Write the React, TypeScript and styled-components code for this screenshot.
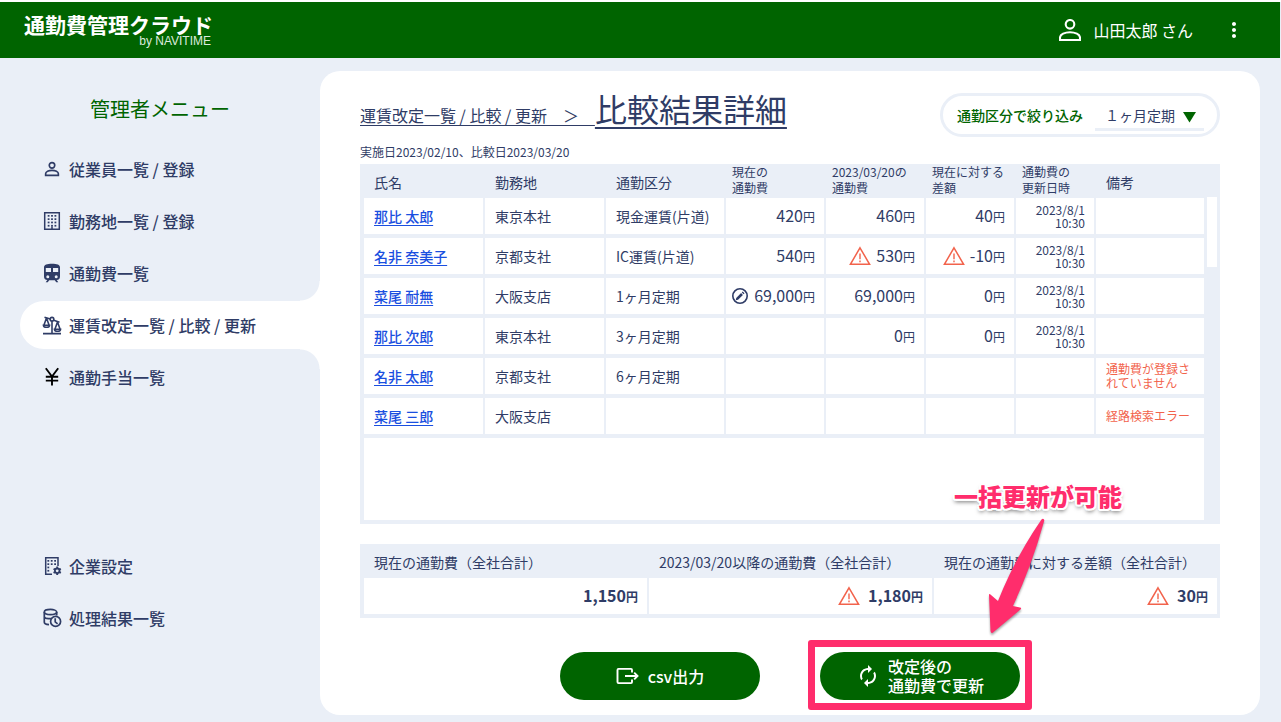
import React from "react";
import styled, { createGlobalStyle, css } from "styled-components";
import { MdAutorenew, MdMoreVert } from "react-icons/md";

const ink = "#2f3c66";
const mist = "#eaeff7";
const green = "#006400";
const alertColor = "#f2634c";
const pink = "#ff2d6c";

const GlobalStyle = createGlobalStyle`
  *, *::before, *::after { box-sizing: border-box; }
  body {
    margin: 0;
    background: ${mist};
    color: ${ink};
    font-family: "Noto Sans CJK JP", sans-serif;
    font-size: 16px;
    line-height: 24px;
  }
  h1, h2, p { margin: 0; font-weight: 400; }
  button, select { font-family: inherit; }
`;

const Page = styled.div`
  min-height: 100vh;
  display: flex;
  flex-direction: column;
  border-top: 2px solid #fff;
`;

const Header = styled.header`
  display: flex;
  align-items: center;
  justify-content: space-between;
  height: 56px;
  margin-right: 1px;
  padding: 0 34px 0 24px;
  background: ${green};
  color: #fff;
`;

const Logo = styled.a`
  display: flex;
  flex-direction: column;
  align-items: flex-end;
  color: #fff;
  text-decoration: none;
`;

const LogoName = styled.span`
  font-size: 21px;
  font-weight: 700;
  line-height: 22px;
`;

const LogoBy = styled.span`
  padding-right: 2px;
  font-family: "Liberation Sans", sans-serif;
  font-size: 12px;
  line-height: 12px;
  color: #dcebdc;
`;

const Account = styled.div`
  display: flex;
  align-items: center;
`;

const AccountName = styled.span`
  margin: 0 29px 0 12px;
`;

const IconButton = styled.button`
  display: flex;
  width: 24px;
  padding: 0;
  border: 0;
  background: none;
  color: inherit;
  justify-content: center;
`;

const Body = styled.div`
  flex: 1;
  display: flex;
`;

const Sidebar = styled.nav`
  flex: 0 0 320px;
  padding-top: 36px;
`;

const SidebarTitle = styled.h2`
  margin-bottom: 21px;
  color: ${green};
  font-size: 20px;
  line-height: 30px;
  text-align: center;
`;

const MenuGroup = styled.ul`
  display: flex;
  flex-direction: column;
  gap: 4px;
  margin: 0 0 141px;
  padding: 0 0 0 20px;
  list-style: none;
  &:last-child { margin-bottom: 0; }
`;

const corner = css`
  content: "";
  position: absolute;
  right: 0;
  width: 20px;
  height: 20px;
`;

const MenuLink = styled.a<{ $active?: boolean }>`
  position: relative;
  display: flex;
  align-items: center;
  gap: 7px;
  height: 48px;
  padding-left: 22px;
  border-radius: 24px 0 0 24px;
  color: ${ink};
  font-weight: 500;
  text-decoration: none;
  svg { flex: none; }
  ${(p) =>
    p.$active &&
    css`
      background: #fff;
      &::before {
        ${corner}
        bottom: 100%;
        background: radial-gradient(circle at 0 0, transparent 19px, #fff 20px);
      }
      &::after {
        ${corner}
        top: 100%;
        background: radial-gradient(circle at 0 100%, transparent 19px, #fff 20px);
      }
    `}
`;

const Card = styled.main`
  flex: 1;
  min-width: 0;
  margin: 13px 21px 7px 0;
  padding: 22px 40px 15px;
  border-radius: 20px;
  background: #fff;
`;

const TitleRow = styled.div`
  display: flex;
  align-items: flex-start;
  justify-content: space-between;
  height: 44px;
`;

const Breadcrumb = styled.div`
  display: flex;
  align-items: baseline;
  line-height: 42px;
`;

const CrumbLink = styled.a`
  color: ${ink};
  white-space: pre;
  text-decoration: underline;
  text-decoration-thickness: 1px;
  text-underline-offset: 3px;
`;

const PageTitle = styled.h1`
  font-size: 32px;
  line-height: 30px;
  text-decoration: underline;
  text-decoration-thickness: 2px;
  text-underline-offset: 5px;
`;

const Filter = styled.div`
  display: flex;
  align-items: center;
  justify-content: space-between;
  width: 280px;
  height: 44px;
  padding: 0 13px 0 14px;
  border: 3px solid ${mist};
  border-radius: 22px;
  font-size: 14px;
`;

const FilterLabel = styled.label`
  color: ${green};
  font-weight: 500;
`;

const SelectBox = styled.div`
  position: relative;
  width: 109px;
  border-bottom: 3px solid ${mist};
  margin-top: 2px;
  svg {
    position: absolute;
    right: 8px;
    top: 11px;
    pointer-events: none;
  }
`;

const Select = styled.select`
  display: block;
  width: 100%;
  height: 27px;
  padding: 0 0 0 10px;
  border: 0;
  background: none;
  color: ${ink};
  font-size: 14px;
  appearance: none;
`;

const DateNote = styled.p`
  margin: 5px 0 2px;
  font-size: 12px;
  line-height: 20px;
`;

const Panel = styled.div`
  display: flex;
  padding-left: 4px;
  background: ${mist};
`;

const Table = styled.table`
  flex: 1;
  width: 100%;
  table-layout: fixed;
  border-collapse: separate;
  border-spacing: 0;
  font-size: 14px;
  line-height: 20px;
`;

const Th = styled.th<{ $small?: boolean }>`
  height: 34px;
  padding: ${(p) => (p.$small ? "0 0 2px 6px" : "1px 0 0 10px")};
  font-weight: 400;
  font-size: ${(p) => (p.$small ? 12 : 14)}px;
  line-height: 16px;
  text-align: left;
  white-space: pre;
`;

const Td = styled.td<{ $kind?: "money" | "date" | "note" | "blank" }>`
  height: ${(p) => (p.$kind === "blank" ? 86 : 40)}px;
  padding: 0 9px 0 10px;
  border-right: 2px solid ${mist};
  border-bottom: 4px solid ${mist};
  background: #fff;
  white-space: nowrap;
  ${(p) => p.$kind === "money" && css`text-align: right; padding-left: 0;`}
  ${(p) => p.$kind === "date" && css`text-align: right; font-size: 12px; line-height: 13px;`}
  ${(p) => p.$kind === "note" && css`color: ${alertColor}; font-size: 12px; line-height: 14px; white-space: normal;`}
`;

const NameLink = styled.a`
  color: #1a4fe0;
  font-weight: 500;
  text-decoration: underline;
  text-decoration-thickness: 1px;
  text-underline-offset: 3px;
`;

const Amount = styled.span<{ $bold?: boolean }>`
  display: flex;
  align-items: center;
  justify-content: flex-end;
  gap: ${(p) => (p.$bold ? 8 : 5)}px;
  font-size: 16px;
  font-weight: ${(p) => (p.$bold ? 700 : 400)};
  line-height: 24px;
`;

const Yen = styled.small`
  font-size: 12px;
`;

const ScrollTrack = styled.div`
  flex: 0 0 14px;
  padding: 33px 3px 0 1px;
`;

const ScrollThumb = styled.div`
  height: 70px;
  background: #fff;
`;

const SummaryPanel = styled(Panel)`
  margin-top: 20px;
  padding-right: 1px;
`;

const Actions = styled.div`
  display: flex;
  justify-content: center;
  gap: 60px;
  margin-top: 34px;
`;

const ActionButton = styled.button`
  display: flex;
  align-items: center;
  justify-content: center;
  gap: 8px;
  width: 200px;
  height: 48px;
  border: 0;
  border-radius: 24px;
  background: ${green};
  color: #fff;
  font-size: 16px;
  font-weight: 500;
  line-height: 19px;
  text-align: left;
`;

const Highlight = styled.div`
  position: relative;
`;

const Frame = styled.div`
  position: absolute;
  inset: -12px -12px -10px;
  border: 7px solid ${pink};
  border-radius: 3px;
  pointer-events: none;
`;

const Callout = styled.div`
  position: absolute;
  left: 134px;
  bottom: 100%;
  margin-bottom: 139px;
  color: ${pink};
  font-size: 24px;
  font-weight: 900;
  line-height: 34px;
  white-space: nowrap;
  text-shadow: 1px 0 #fff, -1px 0 #fff, 0 1px #fff, 0 -1px #fff, 2px 1px #fff, -2px 1px #fff,
    2px -1px #fff, -2px -1px #fff, 1px 2px #fff, -1px 2px #fff, 0 3px 4px rgba(0, 0, 0, 0.6);
`;

const Arrow = styled.svg`
  position: absolute;
  left: 164px;
  bottom: 100%;
  margin-bottom: 14px;
  pointer-events: none;
  filter: drop-shadow(0 2px 1px rgba(0, 0, 0, 0.35));
`;

const PersonIcon = ({ small }: { small?: boolean }) => (
  <svg
    width={small ? 20 : 22}
    height={small ? 20 : 22}
    viewBox={small ? "-4.700 -4.700 31.400 31.400" : "0 0 22 22"}
    fill="none"
    stroke="currentColor"
    strokeWidth={small ? 2.6 : 2.1}
    aria-hidden="true"
  >
    <circle cx="11" cy="5.300" r="4.300" />
    <path d="M1 21V18.600C1 15.200 6 13.200 11 13.200S21 15.200 21 18.600V21Z" />
  </svg>
);

const TrainIcon = () => (
  <svg width="20" height="20" viewBox="0 0 20 20" fill={ink} aria-hidden="true">
    <path
      fillRule="evenodd"
      d="M2 4.500C2 1.500 5 .7 10 .7S18 1.500 18 4.500V13.500A3.500 3.500 0 0 1 14.700 17L16.300 19.300H14.200L12.800 17.300H7.200L5.800 19.300H3.700L5.300 17A3.500 3.500 0 0 1 2 13.500ZM3.800 5V9H9V5ZM11 5V9H16.200V5ZM5.800 12.200A1.500 1.500 0 1 0 5.800 15.200A1.500 1.500 0 1 0 5.800 12.200ZM14.200 12.200A1.500 1.500 0 1 0 14.200 15.200A1.500 1.500 0 1 0 14.200 12.200Z"
    />
  </svg>
);

const BuildingIcon = ({ gear }: { gear?: boolean }) => (
  <svg width="20" height="20" viewBox="0 0 20 20" fill={ink} aria-hidden="true">
    <path
      d={gear ? "M10 18.300H3.700V1.700H16V10" : "M2.700 1.700H17.300V18.300H2.700Z M10 15.500v3"}
      fill="none"
      stroke={ink}
      strokeWidth="1.500"
    />
    {[6.4, 9.8, 13.2].map((x) =>
      [4.8, 8.1, 11.4, 14.7].map((y) =>
        gear && x > 8 && y > 11 ? null : (
          <rect key={x + "-" + y} x={gear ? x - 1 : x - 0.7} y={y - 0.8} width="1.800" height="1.700" />
        )
      )
    )}
    {gear && (
      <g transform="translate(15.200 14.800)" stroke={ink}>
        <circle r="2.300" fill="none" strokeWidth="1.800" />
        {[0, 60, 120].map((a) => (
          <path key={a} d="M0-4.200V-2.400M0 2.400V4.200" strokeWidth="1.900" transform={`rotate(${a})`} />
        ))}
      </g>
    )}
  </svg>
);

const ScaleIcon = () => (
  <svg width="20" height="20" viewBox="0 0 20 20" fill="none" stroke={ink} strokeWidth="1.600" aria-hidden="true">
    <path d="M1 18.600H19M10 6V18.500M2.500 2.200L8.200 4.100M11.800 5.300L17.500 7.200" />
    <circle cx="10" cy="4.200" r="1.800" />
    <path d="M4.500 3L1.900 10.200M4.500 3L7.100 10.200M1.400 10.200C1.600 13 7.400 13 7.600 10.200ZM15.500 7L12.900 14.200M15.500 7L18.100 14.200M12.400 14.200C12.600 17 18.400 17 18.600 14.200Z" />
  </svg>
);

const YenIcon = () => (
  <svg width="20" height="20" viewBox="0 0 20 20" fill="none" stroke="#000" strokeWidth="1.900" aria-hidden="true">
    <path d="M3.800 1.200L10 9.500L16.200 1.200M10 9.500V18.500M3.800 9.800H16.200M3.800 13.600H16.200" />
  </svg>
);

const HistoryDbIcon = () => (
  <svg width="20" height="20" viewBox="0 0 20 20" fill="none" stroke={ink} strokeWidth="1.700" aria-hidden="true">
    <ellipse cx="8.500" cy="4" rx="6.200" ry="2.600" />
    <path d="M2.300 4V14.200C2.300 15.500 4 16.400 7 16.600M14.700 4V7.500M2.300 8.500C2.500 10 5 11 9 10.500" />
    <circle cx="13.600" cy="13.400" r="5" />
    <path d="M13.200 10.200V13.800L15.600 15.800" />
  </svg>
);

const WarningIcon = () => (
  <svg width="22" height="20" viewBox="0 0 22 20" fill="none" stroke={alertColor} aria-label="警告">
    <path d="M11 1.800L20.600 18.300H1.400Z" strokeWidth="1.500" />
    <path d="M11 7.500V13.300M11 14.600V16.300" strokeWidth="1.400" />
  </svg>
);

const EditedIcon = () => (
  <svg width="18" height="18" viewBox="0 0 18 18" fill="none" stroke={ink} aria-label="編集済み">
    <circle cx="9" cy="9" r="7.200" strokeWidth="1.600" />
    <path d="M5.900 12.100L11 7M11.700 6.300L12.600 5.400" strokeWidth="2.600" />
    <path d="M4.800 13.200L5.200 11L7 12.800Z" fill={ink} stroke="none" />
  </svg>
);

const ExportIcon = () => (
  <svg width="24" height="24" viewBox="1 0 24 24" fill="none" stroke="#fff" strokeWidth="1.900" aria-hidden="true">
    <path d="M17 8.500V5.900Q17 4.900 16 4.900H3.500Q2.500 4.900 2.500 5.900V18.100Q2.500 19.100 3.500 19.100H16Q17 19.100 17 18.100V15.500" />
    <path d="M10 12H22M19.200 8.700L22.500 12L19.200 15.300" />
  </svg>
);

const menu = [
  { icon: <PersonIcon small />, text: "従業員一覧 / 登録" },
  { icon: <BuildingIcon />, text: "勤務地一覧 / 登録" },
  { icon: <TrainIcon />, text: "通勤費一覧" },
  { icon: <ScaleIcon />, text: "運賃改定一覧 / 比較 / 更新", active: true },
  { icon: <YenIcon />, text: "通勤手当一覧" },
];

const subMenu = [
  { icon: <BuildingIcon gear />, text: "企業設定" },
  { icon: <HistoryDbIcon />, text: "処理結果一覧" },
];

type Row = {
  name: string;
  place: string;
  kind?: string;
  now?: string;
  edited?: boolean;
  next?: string;
  diff?: string;
  warn?: boolean;
  dated?: boolean;
  note?: string;
};

const rows: Row[] = [
  { name: "那比 太郎", place: "東京本社", kind: "現金運賃(片道)", now: "420", next: "460", diff: "40", dated: true },
  { name: "名非 奈美子", place: "京都支社", kind: "IC運賃(片道)", now: "540", next: "530", diff: "-10", warn: true, dated: true },
  { name: "菜尾 耐無", place: "大阪支店", kind: "1ヶ月定期", now: "69,000", edited: true, next: "69,000", diff: "0", dated: true },
  { name: "那比 次郎", place: "東京本社", kind: "3ヶ月定期", next: "0", diff: "0", dated: true },
  { name: "名非 太郎", place: "京都支社", kind: "6ヶ月定期", note: "通勤費が登録されていません" },
  { name: "菜尾 三郎", place: "大阪支店", note: "経路検索エラー" },
];

const columns = [121, 121, 120, 100, 100, 90, 80, 110];

const totals = [
  { title: "現在の通勤費（全社合計）", value: "1,150" },
  { title: "2023/03/20以降の通勤費（全社合計）", value: "1,180", warn: true },
  { title: "現在の通勤費に対する差額（全社合計）", value: "30", warn: true },
];

const Money = ({ value, icon, bold }: { value?: string; icon?: React.ReactNode; bold?: boolean }) =>
  value ? (
    <Amount $bold={bold}>
      {icon}
      <span>
        {value}
        <Yen>円</Yen>
      </span>
    </Amount>
  ) : null;

const Menu = ({ items }: { items: { icon: React.ReactNode; text: string; active?: boolean }[] }) => (
  <MenuGroup>
    {items.map((m) => (
      <li key={m.text}>
        <MenuLink href="#" $active={m.active} aria-current={m.active ? "page" : undefined}>
          {m.icon}
          {m.text}
        </MenuLink>
      </li>
    ))}
  </MenuGroup>
);

export default function App() {
  return (
    <Page>
      <GlobalStyle />
      <Header>
        <Logo href="#">
          <LogoName>通勤費管理クラウド</LogoName>
          <LogoBy>by NAVITIME</LogoBy>
        </Logo>
        <Account>
          <PersonIcon />
          <AccountName>山田太郎 さん</AccountName>
          <IconButton aria-label="メニュー">
            <MdMoreVert size={24} />
          </IconButton>
        </Account>
      </Header>
      <Body>
        <Sidebar>
          <SidebarTitle>管理者メニュー</SidebarTitle>
          <Menu items={menu} />
          <Menu items={subMenu} />
        </Sidebar>
        <Card>
          <TitleRow>
            <Breadcrumb>
              <CrumbLink href="#">{"運賃改定一覧 / 比較 / 更新　＞　"}</CrumbLink>
              <PageTitle>比較結果詳細</PageTitle>
            </Breadcrumb>
            <Filter>
              <FilterLabel htmlFor="kind">通勤区分で絞り込み</FilterLabel>
              <SelectBox>
                <Select id="kind">
                  <option>１ヶ月定期</option>
                  <option>３ヶ月定期</option>
                  <option>６ヶ月定期</option>
                </Select>
                <svg width="13" height="11" viewBox="0 0 13 11" aria-hidden="true">
                  <path d="M0 0H13L6.500 10.500Z" fill={green} />
                </svg>
              </SelectBox>
            </Filter>
          </TitleRow>
          <DateNote>実施日2023/02/10、比較日2023/03/20</DateNote>
          <Panel>
            <Table>
              <colgroup>
                {columns.map((w, i) => (
                  <col key={i} width={w} />
                ))}
              </colgroup>
              <thead>
                <tr>
                  <Th>氏名</Th>
                  <Th>勤務地</Th>
                  <Th>通勤区分</Th>
                  <Th $small>{"現在の\n通勤費"}</Th>
                  <Th $small>{"2023/03/20の\n通勤費"}</Th>
                  <Th $small>{"現在に対する\n差額"}</Th>
                  <Th $small>{"通勤費の\n更新日時"}</Th>
                  <Th>備考</Th>
                </tr>
              </thead>
              <tbody>
                {rows.map((r) => (
                  <tr key={r.name}>
                    <Td>
                      <NameLink href="#">{r.name}</NameLink>
                    </Td>
                    <Td>{r.place}</Td>
                    <Td>{r.kind}</Td>
                    <Td $kind="money">
                      <Money value={r.now} icon={r.edited && <EditedIcon />} />
                    </Td>
                    <Td $kind="money">
                      <Money value={r.next} icon={r.warn && <WarningIcon />} />
                    </Td>
                    <Td $kind="money">
                      <Money value={r.diff} icon={r.warn && <WarningIcon />} />
                    </Td>
                    <Td $kind="date">
                      {r.dated && (
                        <>
                          2023/8/1
                          <br />
                          10:30
                        </>
                      )}
                    </Td>
                    <Td $kind="note">{r.note}</Td>
                  </tr>
                ))}
                <tr>
                  <Td $kind="blank" colSpan={8} />
                </tr>
              </tbody>
            </Table>
            <ScrollTrack>
              <ScrollThumb />
            </ScrollTrack>
          </Panel>
          <SummaryPanel>
            <Table>
              <thead>
                <tr>
                  {totals.map((t) => (
                    <Th key={t.title}>{t.title}</Th>
                  ))}
                </tr>
              </thead>
              <tbody>
                <tr>
                  {totals.map((t) => (
                    <Td key={t.title} $kind="money">
                      <Money bold value={t.value} icon={t.warn && <WarningIcon />} />
                    </Td>
                  ))}
                </tr>
              </tbody>
            </Table>
          </SummaryPanel>
          <Actions>
            <ActionButton>
              <ExportIcon />
              csv出力
            </ActionButton>
            <Highlight>
              <ActionButton>
                <MdAutorenew size={24} />
                <span>
                  改定後の
                  <br />
                  通勤費で更新
                </span>
              </ActionButton>
              <Frame />
              <Callout>一括更新が可能</Callout>
              <Arrow width="64" height="122" viewBox="0 0 64 122" aria-hidden="true">
                <path
                  d="M57.500 3.500Q59 2 60 3.500Q60.500 4.500 60 5.500Q48 49 29 90L36 91.500Q38 92 36.500 93.500L9 116.500Q7 118 6.500 115L5 79Q5 77 7 79L14 85Q31 42 57.500 3.500Z"
                  fill={pink}
                />
              </Arrow>
            </Highlight>
          </Actions>
        </Card>
      </Body>
    </Page>
  );
}
